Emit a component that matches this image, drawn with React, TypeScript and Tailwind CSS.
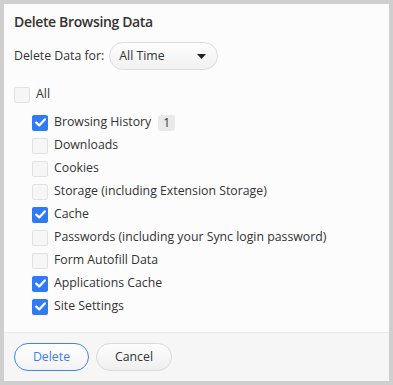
import React from "react";

const items: { label: string; checked: boolean; badge?: string }[] = [
  { label: "Browsing History", checked: true, badge: "1" },
  { label: "Downloads", checked: false },
  { label: "Cookies", checked: false },
  { label: "Storage (including Extension Storage)", checked: false },
  { label: "Cache", checked: true },
  { label: "Passwords (including your Sync login password)", checked: false },
  { label: "Form Autofill Data", checked: false },
  { label: "Applications Cache", checked: true },
  { label: "Site Settings", checked: true },
];

function Box({ checked }: { checked: boolean }) {
  if (checked) {
    return (
      <span className="w-4 h-4 rounded-[2px] bg-[#2f7bf5] flex items-center justify-center shrink-0">
        <svg width="11" height="9" viewBox="0 0 11 9" fill="none">
          <path d="M1.2 4.6 L4.2 7.4 L9.8 1.4" stroke="white" strokeWidth="2.2" strokeLinecap="round" strokeLinejoin="round" />
        </svg>
      </span>
    );
  }
  return <span className="w-4 h-4 rounded-[2px] bg-[#f6f6f6] border border-[#e2e2e2] shrink-0" />;
}

export default function App() {
  return (
    <div className="w-[393px] h-[385px] bg-[#cfcfcf] p-[4px]" style={{ fontFamily: '"Open Sans", "Noto Sans", sans-serif' }}>
      <div className="w-full h-full bg-[#fcfcfc] flex flex-col text-[#333]">
        <div className="flex-1 px-[10px]">
          <div className="pt-[7px] text-[14px] font-semibold tracking-[-0.35px] text-[#333] leading-[22px]">Delete Browsing Data</div>
          <div className="mt-[9px] flex items-center gap-[5px] text-[12.3px]">
            <span>Delete Data for:</span>
            <div className="w-[109px] h-[28px] rounded-full border border-[#dcdcdc] bg-gradient-to-b from-[#fdfdfd] to-[#f1f1f1] flex items-center justify-between pl-[9px] pr-[11px]">
              <span>All Time</span>
              <svg width="9" height="5" viewBox="0 0 9 5">
                <path d="M0 0 H9 L4.5 5 Z" fill="#222" />
              </svg>
            </div>
          </div>
          <div className="mt-[13px] flex items-center gap-[6px] text-[12.3px] h-[23px]">
            <Box checked={false} />
            <span>All</span>
          </div>
          <div className="mt-[5px] pl-[18px] flex flex-col text-[12.3px]">
            {items.map((it) => (
              <div key={it.label} className="flex items-center gap-[6px] h-[23px]">
                <Box checked={it.checked} />
                <span>{it.label}</span>
                {it.badge && (
                  <span className="ml-[1px] h-[16px] w-[17px] rounded-[3px] bg-[#e9e9e9] flex items-center justify-center text-[12px]">
                    {it.badge}
                  </span>
                )}
              </div>
            ))}
          </div>
        </div>
        <div className="h-[49px] border-t border-[#eaeaea] bg-[#f6f6f6] flex items-center gap-[7px] px-[10px]">
          <button className="w-[75px] h-[28px] rounded-full border border-[#3d84f4] bg-gradient-to-b from-[#ffffff] to-[#f3f3f3] text-[#3d7ef0] text-[12.3px]">
            Delete
          </button>
          <button className="w-[76px] h-[28px] rounded-full border border-[#dadada] bg-gradient-to-b from-[#fdfdfd] to-[#efefef] text-[#333] text-[12.3px]">
            Cancel
          </button>
        </div>
      </div>
    </div>
  );
}
